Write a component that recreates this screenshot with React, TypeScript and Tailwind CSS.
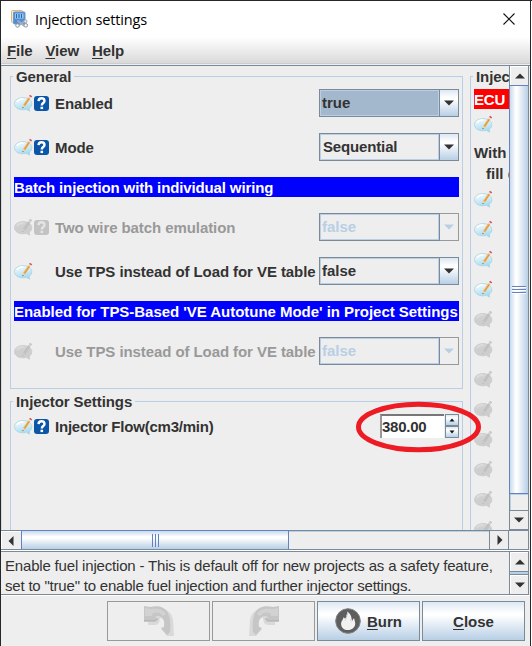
import React from "react";

function Note({ off = false }: { off?: boolean }) {
  return (
    <svg width="19" height="19" viewBox="0 0 19 19" className="block shrink-0">
      <defs>
        <linearGradient id={off ? "bubbleOff" : "bubbleOn"} x1="0" y1="0" x2="0.3" y2="1">
          <stop offset="0" stopColor={off ? "#dadada" : "#f6fbfc"} />
          <stop offset="0.45" stopColor={off ? "#cfcfcf" : "#d8eff8"} />
          <stop offset="1" stopColor={off ? "#cdcdcd" : "#a3dbf3"} />
        </linearGradient>
      </defs>
      <path
        d="M9 3.600C4 3.600.5 6.200.5 9.600s3.300 6.200 8.200 6.200c1.400 0 2.700-.2 3.800-.6.9.9 2 1.600 3.300 1.900-.5-.9-.6-2-.3-3.100 1.500-1.100 2.300-2.500 2.300-4.300 0-3.500-3.600-6.100-8.800-6.100z"
        fill={off ? "url(#bubbleOff)" : "url(#bubbleOn)"}
        stroke={off ? "#c9c9c9" : "#a9d3de"}
        strokeWidth="0.8"
      />
      <path d="M3 7.800C4.500 5.500 7 4.900 9.500 5.100" fill="none" stroke={off ? "#dcdcdc" : "#ffffff"} strokeWidth="1.400" />
      <path d="M14.200 3.300l2.100 1.500-5 7.400-2.700 1.900.6-3.400z" fill={off ? "#bdbdbd" : "#f5b65e"} />
      <path d="M15.400 4.200L10.300 11.600" stroke={off ? "#c8c8c8" : "#d58a35"} strokeWidth="0.8" />
      <path d="M9.200 10.900l2 1.300-2.600 1.900z" fill={off ? "#d0d0d0" : "#f0dcc0"} />
      <path d="M8.500 14.300l.3-1.500 1 .7z" fill={off ? "#b0b0b0" : "#4c4c4c"} />
      <path d="M14.200 3.300l2.100 1.500.9-1.300-2.100-1.500z" fill={off ? "#d2d2d2" : "#dfe3ea"} />
      <path d="M15.100 2l.9-1.300 2.200 1.500-.9 1.400z" fill={off ? "#c4c4c4" : "#df4b57"} />
    </svg>
  );
}

function HelpMark({ off = false }: { off?: boolean }) {
  return (
    <span
      className={
        "ml-px mt-px flex h-[15px] w-[15px] shrink-0 items-center justify-center rounded-[3px] " +
        (off ? "bg-[#c3c3c3]" : "bg-[#0a55a8]")
      }
    >
      <svg width="15" height="15" viewBox="0 0 15 15">
        <path
          d="M4.500 5.100C4.600 3.200 5.800 2.300 7.500 2.300c1.800 0 3 1 3 2.600 0 2.200-2.700 2.100-2.700 4.600"
          fill="none"
          stroke={off ? "#e4e4e4" : "#ffffff"}
          strokeWidth="2.400"
        />
        <rect x="6.500" y="10.700" width="2.600" height="2.400" fill={off ? "#e4e4e4" : "#ffffff"} />
      </svg>
    </span>
  );
}

function Triangle({ dir, color = "#333333" }: { dir: "up" | "down" | "left" | "right"; color?: string }) {
  const paths = {
    up: "M0 7.500L5 2.500l5 5z",
    down: "M0 2.500h10l-5 5z",
    left: "M7.500 0v10l-5-5z",
    right: "M2.500 0l5 5-5 5z",
  };
  return (
    <svg width="10" height="10" viewBox="0 0 10 10" className="block shrink-0">
      <path d={paths[dir]} fill={color} />
    </svg>
  );
}

function Combo({ value, off = false, focus = false }: { value: string; off?: boolean; focus?: boolean }) {
  return (
    <div className="flex h-7 w-[140px] shrink-0">
      <div className={"w-[121px] border border-[#7a8a99] " + (off ? "text-[#b8cfe5]" : "text-[#333333]")}>
        <div
          className={
            "h-full border border-[#b8cfe5] leading-[24px] " +
            (value === "Sequential" ? "pl-[2px] tracking-[-0.15px] " : "pl-px ") +
            (focus ? "bg-[#a3b8cc]" : "bg-[#eeeeee]")
          }
        >
          {value}
        </div>
      </div>
      <div
        className={
          "flex w-[19px] items-center justify-center border-y border-r " +
          (off
            ? "border-[#999999] bg-[#eeeeee]"
            : "border-[#7a8a99] bg-[linear-gradient(#dde8f3,#ffffff_30%,#ffffff_35%,#b8cfe5)]")
        }
      >
        <Triangle dir="down" color={off ? "#b8cfe5" : "#333333"} />
      </div>
    </div>
  );
}

function Row({
  label,
  help = false,
  off = false,
  spacing = "tracking-[-0.08px]",
  children,
}: {
  label: string;
  help?: boolean;
  off?: boolean;
  spacing?: string;
  children: React.ReactNode;
}) {
  return (
    <div className="flex h-7 items-center">
      <div className="flex w-[41px] shrink-0 items-center">
        <Note off={off} />
        {help && <HelpMark off={off} />}
      </div>
      <span className={"min-w-0 grow pt-[2px] " + spacing + (off ? " text-[#999999]" : " text-[#333333]")}>{label}</span>
      {children}
    </div>
  );
}

function Banner({ spacing, children }: { spacing: string; children: React.ReactNode }) {
  return <div className={"h-5 bg-[#0000ff] leading-[21px] text-white " + spacing}>{children}</div>;
}

function MenuItem({ first, rest }: { first: string; rest: string }) {
  return (
    <span>
      <span className="underline decoration-1 underline-offset-[2px]">{first}</span>
      {rest}
    </span>
  );
}

function AppIcon() {
  return (
    <svg width="18" height="18" viewBox="0 0 18 18" className="block">
      <rect x="0.500" y="0.500" width="11" height="12" rx="1" fill="#f7e9c6" stroke="#d6b87c" />
      <rect x="2.500" y="2" width="11.500" height="12" rx="1" fill="#4d8fdb" stroke="#7097c5" />
      <rect x="4" y="3.500" width="8.500" height="5" fill="#a8d0f6" />
      <path d="M5.500 4v4M8 4v4M10.500 4v4" stroke="#2366b4" strokeWidth="1.200" />
      <path d="M6.500 10.500l7 5.500M14.500 10.500L7 16" stroke="#a3adb8" strokeWidth="2" />
      <circle cx="6.500" cy="15.500" r="1.800" fill="#f3f5f7" stroke="#8a97a5" />
      <circle cx="14.800" cy="15.300" r="1.800" fill="#f3f5f7" stroke="#8a97a5" />
      <circle cx="14.500" cy="11.300" r="1.500" fill="#e9edf1" stroke="#9aa6b3" />
    </svg>
  );
}

function CurvedArrow({ flip = false }: { flip?: boolean }) {
  return (
    <svg width="32" height="32" viewBox="0 0 32 32" className={flip ? "block -scale-x-100" : "block"}>
      <path d="M5 4h7c10-2 17 3 18 11l1 16h-7l-6-7 4-3c1-4-1-8-5-8l-1 5-3 2H5z" fill="#d9d9d9" />
      <path d="M1 1l6 1c9-2 15 0 18 6 2 5 3 11 2 19l-3 3-6-7 3-1c1-6-1-12-7-11l-2 1 3 2-2 3H1z" fill="#c6c6c6" />
      <path d="M2 3l6 1c7-1 12 0 15 5l-3 2c-3-4-6-4-10-3l-1 3H2z" fill="#d2d2d2" />
      <path d="M1 15.500h11l3-2" fill="none" stroke="#b6b6b6" />
    </svg>
  );
}

function Burner() {
  return (
    <svg width="26" height="26" viewBox="0 0 26 26" className="block">
      <circle cx="13" cy="13" r="12.300" fill="#5e5e5e" stroke="#808080" />
      <path
        d="M12 3.500c1 3.500-.2 5-2.100 7.300-.4-.8-.6-1.400-1.400-1.900.3 2.200-2.400 3.700-2.400 7 0 3.700 3 6.100 6.900 6.100s7.200-2.600 7.200-6.500c0-2.200-1-3.200-1-5.200-1 .5-1.600 1.400-1.800 2.700-1.300-1.500 0-6.500-5.400-9.500z"
        fill="#f1f1f1"
      />
      <path d="M11.500 6.500c.8 3-.6 4.600-1.600 6.300M15.500 11c.2 1.400.8 2.300 1.600 2.800" fill="none" stroke="#cfcfcf" strokeWidth="0.8" />
    </svg>
  );
}

const legend = "-ml-px h-[17px] px-[3px] leading-[18px] tracking-[-0.08px]";
const gradientButton =
  "flex h-10 w-[103px] items-center justify-center border border-[#7a8a99] bg-[linear-gradient(#dde8f3,#ffffff_30%,#ffffff_35%,#b8cfe5)]";
const disabledButton = "flex h-10 w-[103px] items-center justify-center border border-[#999999]";

export default function App() {
  return (
    <div className="flex h-[646px] w-[532px] flex-col overflow-hidden whitespace-nowrap border-l border-t border-l-[#25272a] border-t-[#292625] bg-[#eeeeee] font-['Liberation_Sans',Arial,sans-serif] text-[15px] font-bold text-[#333333]">
      <div className="flex min-h-0 grow border-r border-white">
        <div className="flex w-[528px] shrink-0 flex-col">
          <header className="-mr-px flex h-9 shrink-0 items-center bg-white pl-[10px]">
            <AppIcon />
            <span className="ml-[6px] grow pt-[2px] font-['Open_Sans','Noto_Sans',sans-serif] text-[14.5px] font-normal tracking-[-0.14px] text-black">
              Injection settings
            </span>
            <svg width="12" height="12" viewBox="0 0 12 12" className="mr-[15px]">
              <path d="M.5.5l11 11M11.500.5l-11 11" stroke="#111111" strokeWidth="1.100" />
            </svg>
          </header>
          <nav className="-mr-px flex h-[26px] shrink-0 gap-[13px] bg-linear-to-b from-white to-[#dadada] pl-[6px] leading-[28px] tracking-[-0.1px]">
            <MenuItem first="F" rest="ile" />
            <MenuItem first="V" rest="iew" />
            <MenuItem first="H" rest="elp" />
          </nav>
          <div className="-mr-px h-[3px] shrink-0 border-b border-t border-b-[#7a8a99] border-t-[#cccccc] bg-[#eeeeee]" />

          <div className="flex h-[464px] shrink-0">
            <main className="flex min-w-0 grow items-start gap-[7px] overflow-hidden border-l border-[#d6d9dc] pl-2 pt-[2px]">
              <div className="w-[453px] shrink-0">
                <fieldset className="h-[321px] min-w-0 border border-[#b8cfe5] px-[3px] pb-0">
                  <legend className={legend}>General</legend>
                  <div className="flex flex-col gap-4 pt-1">
                    <Row label="Enabled" help><Combo value="true" focus /></Row>
                    <Row label="Mode" help><Combo value="Sequential" /></Row>
                    <Banner spacing="tracking-[-0.13px]">Batch injection with individual wiring</Banner>
                    <Row label="Two wire batch emulation" help off><Combo value="false" off /></Row>
                    <Row label="Use TPS instead of Load for VE table"><Combo value="false" /></Row>
                    <Banner spacing="tracking-[-0.035px]">Enabled for TPS-Based 'VE Autotune Mode' in Project Settings</Banner>
                    <Row label="Use TPS instead of Load for VE table" off><Combo value="false" off /></Row>
                  </div>
                </fieldset>
                <fieldset className="mt-1 h-[180px] min-w-0 border border-[#b8cfe5] px-[3px]">
                  <legend className={legend}>Injector Settings</legend>
                  <div className="pt-[2px]">
                    <Row label="Injector Flow(cm3/min)" spacing="tracking-[-0.22px]" help>
                      <div className="relative flex h-6 w-[79px] shrink-0">
                        <div className="w-[64px] border-l-2 border-t-2 border-l-[#999999] border-t-[#777777] bg-white leading-[22px] tracking-[-0.25px]">380.00</div>
                        <div className="ml-px flex w-[14px] flex-col">
                          {(["up", "down"] as const).map((dir) => (
                            <div key={dir} className="flex h-3 items-center justify-center border border-[#7a8a99] bg-[linear-gradient(#dde8f3,#ffffff_30%,#b8cfe5)]">
                              <svg width="6" height="4" viewBox="0 0 6 4">
                                <path d={dir === "up" ? "M.5 3.500L3 .5l2.500 3z" : "M.5.5h5L3 3.500z"} fill="#111111" />
                              </svg>
                            </div>
                          ))}
                        </div>
                        <svg width="127" height="52" viewBox="0 0 127 52" className="absolute -left-[25px] -top-[13px] z-10 max-w-none">
                          <ellipse cx="63.500" cy="26" rx="60" ry="22.700" fill="none" stroke="#ed1c24" strokeWidth="5" />
                        </svg>
                      </div>
                    </Row>
                  </div>
                </fieldset>
              </div>
              <fieldset className="h-[500px] w-[300px] shrink-0 border border-[#b8cfe5] px-[3px]">
                <legend className={legend}>Injector Staging</legend>
                <div className="pt-1">
                  <div className="h-5 bg-[#ff0000] leading-[21px] tracking-[-0.2px] text-white">ECU</div>
                  <div className="flex h-[30px] items-center"><Note /></div>
                  <div className="h-[26px] leading-[27px]">With</div>
                  <div className="h-[19px] pl-3 leading-[18px]">fill d</div>
                  {Array.from({ length: 12 }, (_, i) => (
                    <div key={i} className="flex h-[30px] items-center"><Note off={i > 3} /></div>
                  ))}
                </div>
              </fieldset>
            </main>
            <div className="flex w-[20px] shrink-0 flex-col border-x border-[#7a8a99]">
              <div className="flex h-[19px] items-center justify-center border-l border-t border-white pb-px"><Triangle dir="up" /></div>
              <div className="-ml-px flex h-[409px] flex-col items-center justify-center gap-px border border-r-0 border-[#6382bf] bg-[linear-gradient(90deg,#c8daec,#ffffff_32%,#ffffff_38%,#b8cfe5)]">
                <div className="h-[2px] w-[14px] border-b border-white bg-[#6382bf]" />
                <div className="h-[2px] w-[14px] border-b border-white bg-[#6382bf]" />
                <div className="h-[2px] w-[14px] border-b border-white bg-[#6382bf]" />
              </div>
              <div className="grow border-l border-t border-[#b8cfe5]" />
              <div className="flex h-[20px] items-center justify-center border-y border-[#7a8a99]"><Triangle dir="down" /></div>
            </div>
          </div>

          <div className="flex h-[20px] shrink-0 border-y border-[#7a8a99]">
            <div className="flex w-[20px] items-center justify-center border-l border-t border-white pr-[2px]"><Triangle dir="left" /></div>
            <div className="-mt-px flex w-[268px] items-center justify-center gap-[2px] border border-b-0 border-[#6382bf] bg-[linear-gradient(#c8daec,#ffffff_32%,#ffffff_38%,#b8cfe5)]">
              <div className="h-[13px] w-px bg-[#6382bf]" />
              <div className="h-[13px] w-px bg-[#6382bf]" />
              <div className="h-[13px] w-px bg-[#6382bf]" />
            </div>
            <div className="grow border-t border-[#b8cfe5]" />
            <div className="flex w-[19px] items-center justify-center border-l border-[#7a8a99] pl-px"><Triangle dir="right" /></div>
            <div className="w-[21px] border-x border-[#7a8a99]" />
          </div>
          <div className="h-px shrink-0 bg-white" />

          <div className="flex h-[44px] shrink-0 border-y border-[#7a8a99]">
            <p className="min-w-0 grow overflow-hidden pl-1 pt-1 font-normal leading-5">
              <span className="tracking-[-0.18px]">
                Enable fuel injection - This is default off for new projects as a safety feature,
              </span>
              <br />
              <span className="tracking-[-0.2px]">
                set to "true" to enable fuel injection and further injector settings.
              </span>
            </p>
            <div className="flex w-[20px] flex-col border-x border-[#7a8a99]">
              <div className="flex h-[19px] items-center justify-center border-l border-t border-white"><Triangle dir="up" /></div>
              <div className="h-[4px] border-y border-[#7a8a99] bg-[#b8cfe5]" />
              <div className="flex grow items-center justify-center border-l border-t border-white"><Triangle dir="down" /></div>
            </div>
          </div>
          <div className="h-px shrink-0 bg-white" />

          <footer className="flex gap-[2px] pl-[106px] pt-[5px]">
            <button className={disabledButton}><CurvedArrow /></button>
            <button className={disabledButton}><CurvedArrow flip /></button>
            <button className={gradientButton}>
              <Burner />
              <span className="ml-[6px] pt-[2px]"><MenuItem first="B" rest="urn" /></span>
            </button>
            <button className={gradientButton}>
              <span className="pt-[2px]"><MenuItem first="C" rest="lose" /></span>
            </button>
          </footer>
        </div>
        <div className="ml-px w-px bg-[#25272a]" />
      </div>
    </div>
  );
}
